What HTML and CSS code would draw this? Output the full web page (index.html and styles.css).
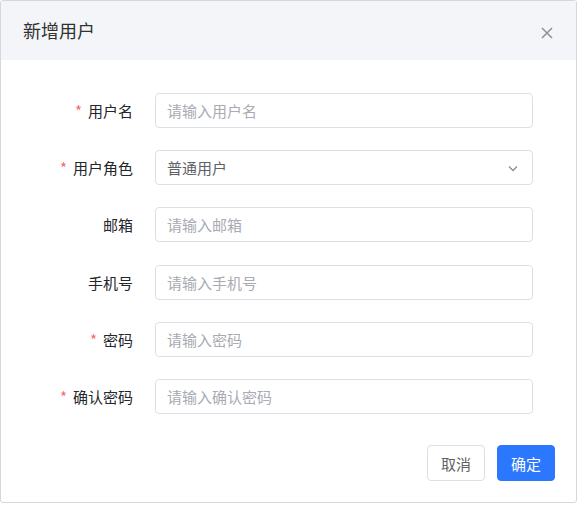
FILE: index.html
```html
<!DOCTYPE html>
<html lang="zh-CN">
  <head>
    <meta charset="UTF-8" />
    <meta name="viewport" content="width=device-width, initial-scale=1.0" />
    <title>新增用户</title>
    <link rel="stylesheet" href="styles.css">
  </head>
  <body>
    <!-- 新增用户弹窗 -->
    <div class="dialog">
      <div class="dialog-header">
        <span class="dialog-title">新增用户</span>
        <button class="dialog-close" aria-label="关闭">
          <svg width="12" height="12" viewBox="0 0 12 12">
            <path d="M1 1 L11 11 M11 1 L1 11" stroke="#909399" stroke-width="1.6" fill="none" />
          </svg>
        </button>
      </div>

      <form class="user-form">
        <label class="form-label required">用户名</label>
        <input class="form-input" type="text" placeholder="请输入用户名" />

        <label class="form-label required">用户角色</label>
        <div class="form-input form-select">
          <span>普通用户</span>
          <svg width="12" height="12" viewBox="0 0 12 12">
            <path d="M2 4.5 L6 8.5 L10 4.5" stroke="#8b8e96" stroke-width="1.3" fill="none" />
          </svg>
        </div>

        <label class="form-label">邮箱</label>
        <input class="form-input" type="text" placeholder="请输入邮箱" />

        <label class="form-label">手机号</label>
        <input class="form-input" type="text" placeholder="请输入手机号" />

        <label class="form-label required">密码</label>
        <input class="form-input" type="password" placeholder="请输入密码" />

        <label class="form-label required">确认密码</label>
        <input class="form-input" type="password" placeholder="请输入确认密码" />
      </form>

      <div class="dialog-footer">
        <button class="btn">取消</button>
        <button class="btn btn-primary">确定</button>
      </div>
    </div>
  </body>
</html>
```

FILE: styles.css
```css
body {
  margin: 0;
  background-color: #ffffff;
  font-family: "Noto Sans CJK SC", "Liberation Sans", sans-serif;
  color: #303133;
}
.dialog {
  width: 575px;
  height: 501px;
  border: 1px solid #d6d7db;
  border-radius: 3px;
  background-color: #ffffff;
  display: flex;
  flex-direction: column;
  overflow: hidden;
}
.dialog-header {
  height: 59px;
  background-color: #f4f5f8;
  display: flex;
  align-items: center;
  justify-content: space-between;
  padding: 0 23px 0 22px;
}
.dialog-title {
  font-size: 18px;
  color: #303133;
  margin-top: -1px;
}
.dialog-close {
  border: none;
  background: none;
  padding: 0;
  margin-top: 5px;
  width: 12px;
  height: 12px;
  cursor: pointer;
}
.user-form {
  display: grid;
  grid-template-columns: 112px 378px;
  column-gap: 22px;
  row-gap: 22.2px;
  padding: 33px 0 0 20px;
  align-items: center;
}
.form-label {
  text-align: right;
  font-size: 15px;
  color: #24262b;
  padding-right: 0;
}
.form-label.required::before {
  content: "*";
  color: #f56c6c;
  margin-right: 6px;
}
.form-input {
  box-sizing: border-box;
  height: 35px;
  width: 378px;
  border: 1px solid #dcdfe6;
  border-radius: 4px;
  padding: 0 11px;
  font-size: 15px;
  font-family: inherit;
  color: #606266;
  outline: none;
}
.form-input::placeholder {
  color: #a8abb2;
}
.form-select {
  display: flex;
  align-items: center;
  justify-content: space-between;
  padding-right: 13px;
}
.dialog-footer {
  margin-top: auto;
  display: flex;
  justify-content: flex-end;
  gap: 12px;
  padding: 0 21px 21px 0;
}
.btn {
  height: 36px;
  padding: 0 13px;
  font-size: 15px;
  font-family: inherit;
  color: #606266;
  background-color: #ffffff;
  border: 1px solid #dcdfe6;
  border-radius: 4px;
  cursor: pointer;
}
.btn-primary {
  color: #ffffff;
  background-color: #2b77fe;
  border-color: #2b77fe;
}
```
